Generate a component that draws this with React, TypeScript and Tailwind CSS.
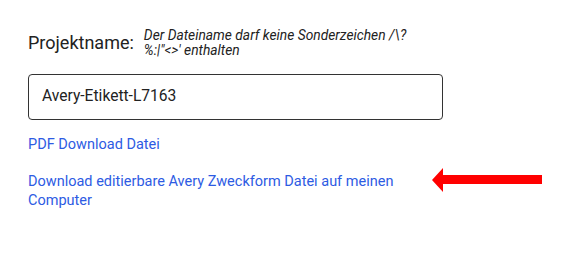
export default function App() {
  return (
    <div className="w-[562px] h-[275px] bg-white pl-[28px] pt-[28px] font-['Roboto',sans-serif]">
      <div className="flex items-center gap-[10px]">
        <span className="text-[18px] text-[#222] leading-[22px]">Projektname:</span>
        <span className="text-[13.8px] italic text-[#222] leading-[15px]">
          Der Dateiname darf keine Sonderzeichen /\?
          <br />
          %:|"&lt;&gt;' enthalten
        </span>
      </div>
      <div className="mt-[16px] w-[415px] h-[46px] border border-[#333] rounded-[4px] flex items-center px-[13px]">
        <span className="text-[15.6px] text-[#222]">Avery-Etikett-L7163</span>
      </div>
      <div className="mt-[15px] flex flex-col text-[14.5px] text-[#2d5be3] leading-[19px]">
        <a className="cursor-pointer">PDF Download Datei</a>
        <div className="mt-[18px] flex items-start">
          <a className="w-[400px] cursor-pointer">
            Download editierbare Avery Zweckform Datei auf meinen Computer
          </a>
          <svg width="110" height="24" viewBox="0 0 110 24" className="ml-[4px] -mt-[4px]">
            <polygon points="0,12 11,0 11,7 110,7 110,16 11,16 11,24" fill="#ff0000" />
          </svg>
        </div>
      </div>
    </div>
  );
}
